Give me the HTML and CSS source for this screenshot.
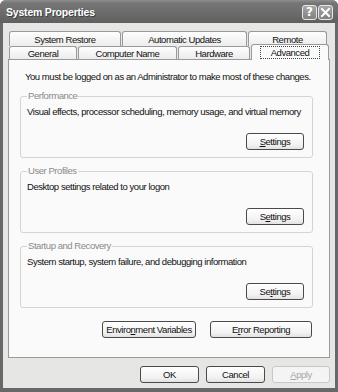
FILE: index.html
```html
<!DOCTYPE html>
<html>
<head>
<meta charset="utf-8">
<link rel="stylesheet" href="styles.css">
</head>
<body>
<div class="window">
  <div class="titlebar">
    <span class="title">System Properties</span>
    <div class="tbtns">
      <span class="tbtn help">?</span>
      <span class="tbtn close"><svg width="11" height="11" viewBox="0 0 11 11"><path d="M2 2 L9 9 M9 2 L2 9" stroke="#fff" stroke-width="2" stroke-linecap="square"/></svg></span>
    </div>
  </div>
  <div class="body">
    <div class="tabs">
      <div class="tabrow back">
        <div class="tab w-restore">System Restore</div>
        <div class="tab w-updates">Automatic Updates</div>
        <div class="tab w-remote">Remote</div>
      </div>
      <div class="tabrow front">
        <div class="tab w-general">General</div>
        <div class="tab w-compname">Computer Name</div>
        <div class="tab w-hardware">Hardware</div>
        <div class="tab w-advanced selected"><span class="focus">Advanced</span></div>
      </div>
    </div>
    <div class="panel">
      <p class="note">You must be logged on as an Administrator to make most of these changes.</p>
      <fieldset class="group">
        <legend>Performance</legend>
        <p class="desc">Visual effects, processor scheduling, memory usage, and virtual memory</p>
        <div class="group-actions"><button class="btn settings"><u>S</u>ettings</button></div>
      </fieldset>
      <fieldset class="group">
        <legend>User Profiles</legend>
        <p class="desc">Desktop settings related to your logon</p>
        <div class="group-actions"><button class="btn settings">S<u>e</u>ttings</button></div>
      </fieldset>
      <fieldset class="group">
        <legend>Startup and Recovery</legend>
        <p class="desc">System startup, system failure, and debugging information</p>
        <div class="group-actions"><button class="btn settings">Se<u>t</u>tings</button></div>
      </fieldset>
      <div class="panel-actions">
        <button class="btn envvars">Enviro<u>n</u>ment Variables</button>
        <button class="btn errrep">E<u>r</u>ror Reporting</button>
      </div>
    </div>
    <div class="dialog-actions">
      <button class="btn ok">OK</button>
      <button class="btn cancel">Cancel</button>
      <button class="btn apply" disabled><u>A</u>pply</button>
    </div>
  </div>
</div>
</body>
</html>
```

FILE: styles.css
```css
* { box-sizing: border-box; }
html, body { margin: 0; padding: 0; background: #fff; }
body {
  font-family: "Liberation Sans", Arial, sans-serif;
  font-size: 9.5px;
  letter-spacing: -0.45px;
  color: #111;
}
.window {
  width: 338px;
  height: 392px;
  background: #686868;
  display: flex;
  flex-direction: column;
  border-radius: 6px 6px 0 0;
  overflow: hidden;
}
.titlebar {
  height: 23px;
  flex: none;
  display: flex;
  align-items: center;
  justify-content: space-between;
  padding: 0 5px 0 6px;
  background: linear-gradient(#909090 0, #767676 3px, #6a6a6a 60%, #606060 100%);
}
.title {
  color: #fff;
  font-weight: bold;
  font-size: 10.5px;
  letter-spacing: -0.2px;
  text-shadow: 1px 1px 0 #404040;
}
.tbtns { display: flex; gap: 1px; margin-top: 1px; }
.tbtn {
  width: 15px;
  height: 15px;
  border: 1px solid #e8e8e8;
  border-radius: 3px;
  background: linear-gradient(#a6a6a6, #808080);
  display: flex;
  align-items: center;
  justify-content: center;
  color: #fff;
  font-family: "DejaVu Sans", sans-serif;
  letter-spacing: 0;
  font-weight: bold;
  font-size: 12px;
}
.tbtn svg { display: block; }
.body {
  flex: 1;
  margin: 0 3px 4px 3px;
  background: #e6e6e4;
  padding: 8px 5px 0 5px;
  display: flex;
  flex-direction: column;
}
.tabs { display: flex; flex-direction: column; padding-left: 1px; }
.tabrow { display: flex; gap: 1px; }
.tab {
  border: 1px solid #9a9a9a;
  border-bottom: none;
  border-radius: 3px 3px 0 0;
  background: linear-gradient(#fefefe, #ececec);
  display: flex;
  align-items: center;
  justify-content: center;
  line-height: 11px;
  white-space: nowrap;
}
.back .tab { height: 15px; }
.front .tab { height: 13px; }
.w-restore { width: 112px; }
.w-updates { width: 125px; }
.w-remote { width: 79px; }
.w-general { width: 68px; }
.w-compname { width: 99px; }
.w-hardware { width: 72px; }
.w-advanced { width: 78px; }
.front .tab.selected {
  height: 16px;
  margin-top: -2px;
  margin-bottom: -1px;
  background: #fafafa;
  position: relative;
  z-index: 1;
  align-items: flex-start;
  padding-top: 1px;
}
.focus { border: 1px dotted #444; padding: 0 10px; line-height: 11px; }
.panel {
  border: 1px solid #9a9a9a;
  background: #fafafa;
  height: 299px;
  padding: 11px 16px 0 11px;
  display: flex;
  flex-direction: column;
}
.note { margin: 0 0 7px 5px; line-height: 12px; white-space: nowrap; }
.group {
  margin: 0 0 6px 0;
  border: 1px solid #d4d4d4;
  border-radius: 3px;
  padding: 4px 8px 7px 6px;
  min-width: 0;
}
.group + .group { margin-top: 1px; }
.group legend {
  color: #8a8a8a;
  padding: 0 1px;
  line-height: 12px;
}
.desc { margin: 0; line-height: 12px; white-space: nowrap; }
.group-actions { display: flex; justify-content: flex-end; margin-top: 15px; }
.btn {
  font: inherit;
  letter-spacing: inherit;
  color: #111;
  height: 17px;
  border: 1px solid #4a4a4a;
  border-radius: 3px;
  background: linear-gradient(#ffffff, #f2f2f2 70%, #e2e2e2);
  padding: 0;
  line-height: 13px;
  white-space: nowrap;
}
.settings { width: 58px; }
.panel-actions { display: flex; justify-content: flex-end; gap: 14px; margin-top: 7px; padding-right: 1px; }
.envvars { width: 94px; }
.errrep { width: 102px; }
.dialog-actions { display: flex; justify-content: flex-end; gap: 7px; margin-top: 8px; }
.ok { width: 59px; }
.cancel { width: 59px; }
.apply { width: 58px; color: #a8a8a8; border-color: #c8c8c8; background: #f4f4f4; }
```
